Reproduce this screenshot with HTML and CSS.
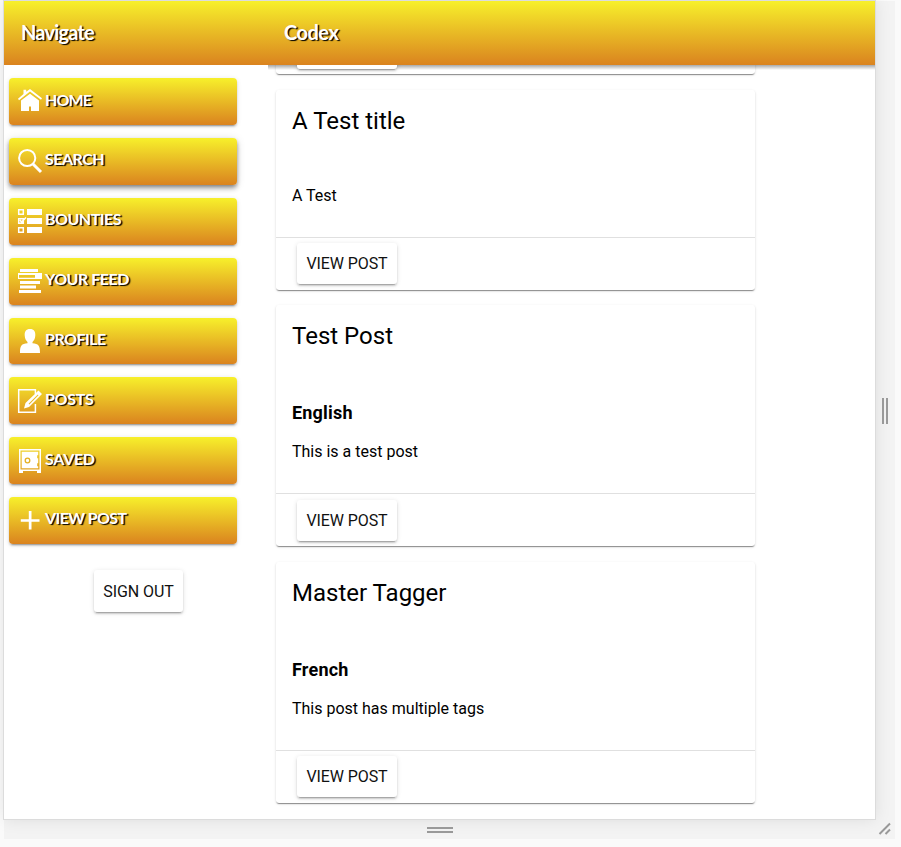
FILE: index.html
```
<!DOCTYPE html>
<html lang="en">
<head>
<meta charset="utf-8">
<title>Codex</title>
<link rel="stylesheet" href="styles.css">
</head>
<body>
<div class="viewport">
  <div class="frame">
    <header class="topbar"><div class="brand">Navigate</div><div class="title">Codex</div></header>
    <div class="content">
      <nav class="sidebar">
        <a class="item"><svg viewBox="0 0 24 24"><path d="M0 9.8 5.5 5V.7h2.7v2L12 0l12 9.3-1 1.4L12 2.4 1 11.2ZM3 11.5 12 4.8l9 6.7V22h-8v-4.500h-2V22H3Z"/></svg><span class="w-home">HOME</span></a>
        <a class="item focus"><svg viewBox="0 0 24 24"><g class="line lens"><circle cx="9.200" cy="9" r="8.100"/><path class="thick" d="m15 15 8 8"/></g></svg><span class="w-search">SEARCH</span></a>
        <a class="item"><svg viewBox="0 0 24 24"><path d="M9 0h15v6H9ZM9 9h15v6H9ZM9 18h15v6H9Z"/><g class="line"><path d="M.7.7h4.600v4.600H.7ZM.7 9.700h4.600v4.600H.7ZM.7 18.700h4.600v4.600H.7ZM2 11l1.500 2L8 8.500"/></g></svg><span class="w-bounties">BOUNTIES</span></a>
        <a class="item"><svg viewBox="0 0 24 24"><path fill-rule="evenodd" d="M2 0h18v3H2ZM0 4h24v6H0ZM1 6v2.800h16V6ZM2 12h20v3H2ZM2 16.500h16v3H2ZM1 21h22v3H1Z"/></svg><span class="w-feed">YOUR FEED</span></a>
        <a class="item"><svg viewBox="0 0 24 24"><path d="M12 0c4 0 5.500 2.500 5.300 6.500-.2 3.500-1.300 5-2.800 6.500v1.200C20.500 15 22 16 22 24H2c0-8 1.500-9 7.500-9.800V13C8 11.500 6.900 10 6.700 6.500 6.500 2.500 8 0 12 0Z"/></svg><span class="w-profile">PROFILE</span></a>
        <a class="item"><svg viewBox="0 0 24 24"><g class="line"><path d="M17.400 5V.7H.7v22.600h16.700V15"/></g><path fill-rule="evenodd" d="M20.500 1.500 24 5 11 18l-5 1.500L7.500 14ZM19.800 5.500 10.600 14.700l.7.7L20.500 6.200Z"/></svg><span class="w-posts">POSTS</span></a>
        <a class="item"><svg viewBox="0 0 24 24"><path fill-rule="evenodd" d="M1 0h22v24h-4v-2H5v2H1ZM2.500 1.500v19h19v-19ZM3.700 2.800h16.500v3.500h-1v3h1v5h-1v3h1v2H3.700Z"/><circle class="dial" cx="9.500" cy="11.500" r="2.300"/></svg><span class="w-saved">SAVED</span></a>
        <a class="item"><svg viewBox="0 0 24 24"><path d="M10.800 2h2.700v8.300H21.500v2.500h-8V20.500h-2.700v-7.700H2.800v-2.500h8Z"/></svg><span class="w-view">VIEW POST</span></a>
        <button class="btn signout">SIGN OUT</button>
      </nav>
      <main class="posts">
        <article class="card previous"><footer><button class="btn"></button></footer></article>
        <article class="card">
          <h2>A Test title</h2>
          <div class="body"><p>A Test</p></div>
          <footer><button class="btn">VIEW POST</button></footer>
        </article>
        <article class="card">
          <h2>Test Post</h2>
          <div class="body tagged"><h3>English</h3><p>This is a test post</p></div>
          <footer><button class="btn">VIEW POST</button></footer>
        </article>
        <article class="card">
          <h2>Master Tagger</h2>
          <div class="body tagged"><h3>French</h3><p>This post has multiple tags</p></div>
          <footer><button class="btn">VIEW POST</button></footer>
        </article>
      </main>
    </div>
  </div>
  <div class="handle-x"><i></i></div>
  <div class="handle-y"><i></i></div>
  <div class="corner"><svg viewBox="0 0 14 14"><path d="M1.500 12 12 1.500M7.500 12 12 7.500"/></svg></div>
</div>
</body>
</html>
```
FILE: styles.css
```
* { box-sizing: border-box; }
body { margin: 0; height: 847px; overflow: hidden; background: #fafafa; color: #000; font-family: Roboto, sans-serif; font-size: 16px; }
.viewport { display: grid; grid-template-columns: 871px 20px; grid-template-rows: 818px 20px; width: 891px; margin: 1px 0 0 4px; background: #f3f3f3; }
.frame { background: #fff; box-shadow: 0 0 0 1px #dcdcdc, 0 0 16px rgba(0,0,0,.1); display: flex; flex-direction: column; overflow: hidden; }
.topbar { display: flex; flex: none; height: 64px; background: linear-gradient(#f7f02b, #da831f); line-height: 63px; color: #fff; font-family: Lato, sans-serif; font-weight: 700; font-size: 20px; text-shadow: 1.5px 1px 1px #000; }
.brand { width: 264px; padding-left: 17px; letter-spacing: -.8px; }
.title { padding-left: 16px; letter-spacing: -.5px; }
.content { display: flex; flex: 1; min-height: 0; }
.sidebar { width: 264px; padding: 13px 31px 0 5px; display: flex; flex-direction: column; gap: 13px; align-items: stretch; }
.item { flex: none; height: 46.9px; padding: 0 9px; display: flex; align-items: center; gap: 3px; border-radius: 4px; background: linear-gradient(#f7f02b, #da831f); box-shadow: 0 3px 1px -2px rgba(0,0,0,.2), 0 2px 2px rgba(0,0,0,.14), 0 1px 5px rgba(0,0,0,.12); color: #fff; font: 700 16px/20px Lato, sans-serif; text-shadow: 1.5px 1px 1px #000; white-space: nowrap; }
.focus { box-shadow: 0 2px 4px -1px rgba(0,0,0,.4), 0 4px 5px rgba(0,0,0,.2), 0 1px 10px rgba(0,0,0,.12); }
.item svg { width: 24px; height: 24px; fill: #fff; flex: none; overflow: visible; }
.item span { padding-bottom: 4px; letter-spacing: -.8px; }
.item .w-home { letter-spacing: -.9px; padding-bottom: 3px; }
.item .w-search, .item .w-bounties, .item .w-profile { letter-spacing: -.5px; }
.item .w-feed { letter-spacing: -.5px; }
.item .w-posts, .item .w-saved { letter-spacing: -.3px; }
.item .w-view { letter-spacing: -.6px; padding-bottom: 5px; }
.line { fill: none; stroke: #fff; stroke-width: 1.5; }
.lens { stroke-width: 2; }
.thick { stroke-width: 3; }
.dial { fill: #fff; stroke: #e5b023; stroke-width: 1.3; }
.btn { border: 0; border-radius: 3px; background: #fff; height: 41px; padding: 0; font: 400 16px Roboto, sans-serif; letter-spacing: -.1px; color: #111; box-shadow: 0 3px 1px -2px rgba(0,0,0,.2), 0 2px 2px rgba(0,0,0,.14), 0 1px 5px rgba(0,0,0,.12); }
.signout { width: 89px; height: 42px; flex: none; margin: 13px 0 0 85px; }
.posts { flex: 1; padding-left: 8px; overflow: hidden; background: linear-gradient(rgba(0,0,0,.34), transparent) 0 0 / 100% 5px no-repeat; }
.card { width: 479px; margin-bottom: 15.500px; border-radius: 3px; background: transparent; box-shadow: 0 2px 1px -1px rgba(0,0,0,.3), 0 1px 1px rgba(0,0,0,.14), 0 1px 3px rgba(0,0,0,.12); }
.previous { margin-top: -43.500px; margin-bottom: 16px; }
.card h2 { margin: 0; padding: 16px 16px 0; height: 64px; font-size: 24px; line-height: 31px; font-weight: 400; }
.body { height: 83px; padding: 32px 16px 0; }
.body p, .body h3 { margin: 0; line-height: 20px; font-size: 16px; }
.body.tagged { height: 124px; padding-top: 33px; }
.body h3 { font-size: 18px; line-height: 22px; margin-bottom: 18px; font-weight: 700; letter-spacing: .2px; }
.card footer { height: 52.500px; border-top: 1px solid #e0e0e0; padding: 5px 21px; }
.card .btn { display: block; width: 100px; }
.card .tagged + footer { height: 53px; padding-top: 5.500px; }
.handle-x, .handle-y, .corner { display: flex; align-items: center; justify-content: center; }
.handle-x { padding-top: 2px; }
.handle-y { padding-top: 2px; }
.handle-x i { width: 6px; height: 26px; border: solid #999; border-width: 0 2px; }
.handle-y i { width: 26px; height: 6px; border: solid #999; border-width: 2px 0; }
.corner svg { width: 14px; height: 14px; fill: none; stroke: #999; stroke-width: 2; }
```
